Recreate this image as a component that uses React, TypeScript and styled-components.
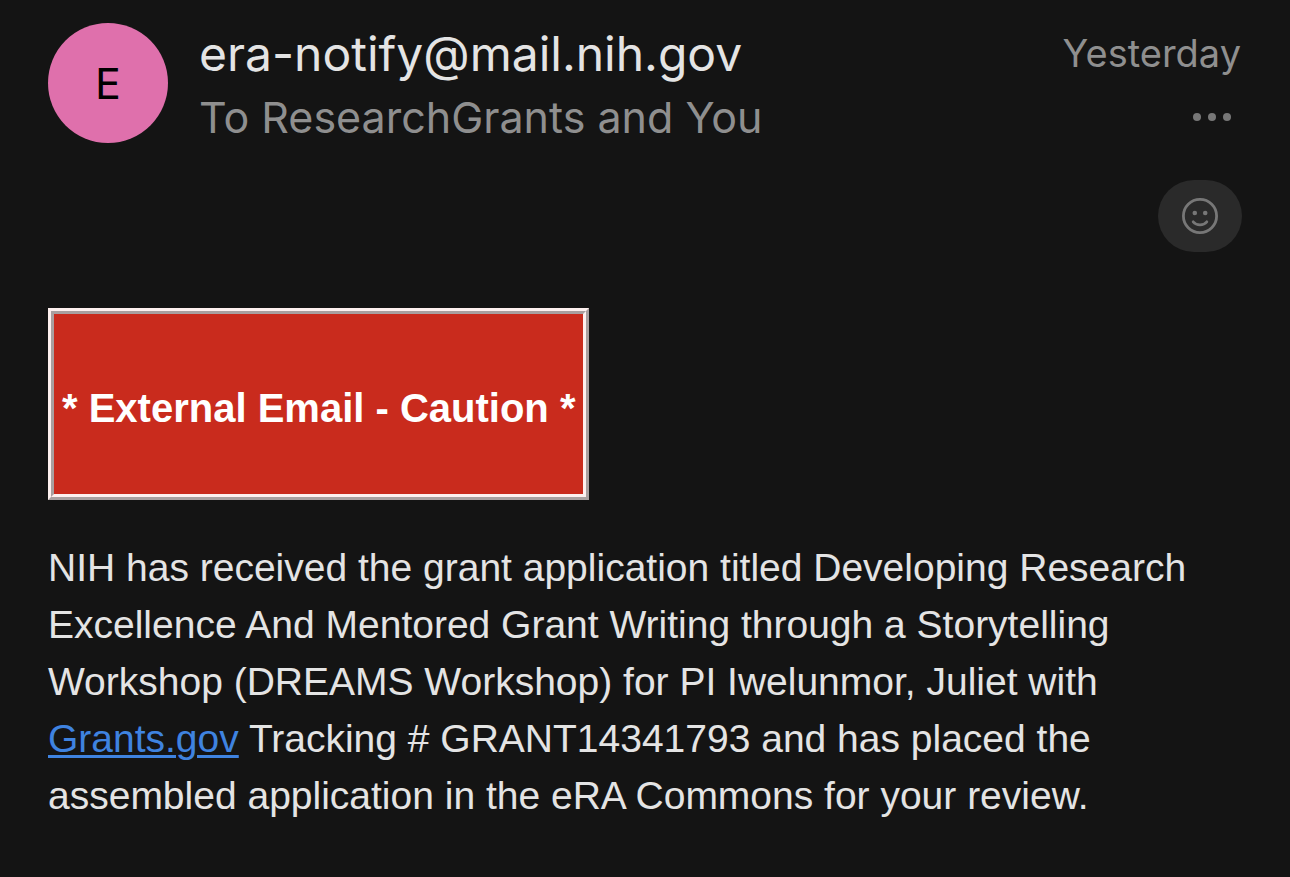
import React from "react";
import styled, { createGlobalStyle } from "styled-components";

const GlobalStyle = createGlobalStyle`
  *, *::before, *::after { box-sizing: border-box; }
  body {
    margin: 0;
    background: #141414;
    color: #e4e4e4;
    font-family: Inter, "Liberation Sans", sans-serif;
  }
`;

const Message = styled.article`
  padding: 23px 48px 24px;
`;

const Header = styled.header`
  display: flex;
  align-items: flex-start;
  gap: 31px;
`;

const Avatar = styled.div`
  display: grid;
  place-items: center;
  flex: none;
  width: 120px;
  height: 120px;
  border-radius: 50%;
  background: #df70ac;
  color: #000;
  font-size: 43px;
`;

const Names = styled.div`
  flex: 1;
  min-width: 0;
`;

const Sender = styled.h1`
  margin: 0;
  font-size: 48px;
  line-height: 62px;
  font-weight: 400;
`;

const Recipients = styled.p`
  margin: 0;
  font-size: 43px;
  line-height: 64px;
  color: #8f8f8f;
`;

const Aside = styled.div`
  display: flex;
  flex-direction: column;
  align-items: flex-end;
`;

const Time = styled.time`
  padding-right: 1px;
  font-size: 38px;
  line-height: 60px;
  color: #8f8f8f;
`;

const IconButton = styled.button`
  display: grid;
  place-items: center;
  border: 0;
  padding: 0;
  color: #777;
  background: transparent;
  cursor: pointer;
`;

const MoreButton = styled(IconButton)`
  width: 60px;
  height: 68px;
`;

const Reactions = styled.div`
  display: flex;
  justify-content: flex-end;
  margin-top: 29px;
`;

const ReactButton = styled(IconButton)`
  width: 84px;
  height: 72px;
  border-radius: 36px;
  background: #2a2a2a;
`;

const Body = styled.div`
  margin-top: 56px;
  font-family: "Liberation Sans", Arial, sans-serif;
  font-size: 39px;
  line-height: 57px;
`;

const Caution = styled.div`
  display: grid;
  place-items: center;
  width: max-content;
  max-width: 100%;
  min-height: 192px;
  padding: 8px 8px 0;
  border: 6px ridge #fdf0ef;
  background: #c92b1d;
  color: #fff;
  font-size: 40px;
  font-weight: 700;
`;

const Paragraph = styled.p`
  max-width: 1160px;
  margin: 39px 0 0;
`;

const Link = styled.a`
  color: #3f83e0;
  text-decoration: underline;
  text-decoration-thickness: 3px;
  text-underline-offset: 3px;
`;

export default function App() {
  return (
    <>
      <GlobalStyle />
      <Message>
        <Header>
          <Avatar aria-hidden="true">E</Avatar>
          <Names>
            <Sender>era-notify@mail.nih.gov</Sender>
            <Recipients>To ResearchGrants and You</Recipients>
          </Names>
          <Aside>
            <Time>Yesterday</Time>
            <MoreButton type="button" aria-label="More actions">
              <svg width="40" height="10" viewBox="0 0 40 10" fill="currentColor">
                <circle cx="5" cy="5" r="4" />
                <circle cx="20" cy="5" r="4" />
                <circle cx="35" cy="5" r="4" />
              </svg>
            </MoreButton>
          </Aside>
        </Header>
        <Reactions>
          <ReactButton type="button" aria-label="Add reaction">
            <svg width="36" height="36" viewBox="0 0 36 36" fill="none">
              <circle cx="18" cy="18" r="16.6" stroke="currentColor" strokeWidth="2.8" />
              <circle cx="12.8" cy="15" r="2.3" fill="currentColor" />
              <circle cx="23.2" cy="15" r="2.3" fill="currentColor" />
              <path
                d="M11.2 23.8C14.6 27.8 21.4 27.8 24.8 23.8"
                stroke="currentColor"
                strokeWidth="2.8"
                strokeLinecap="round"
              />
            </svg>
          </ReactButton>
        </Reactions>
        <Body>
          <Caution role="note">* External Email - Caution *</Caution>
          <Paragraph>
            NIH has received the grant application titled Developing Research Excellence And
            Mentored Grant Writing through a Storytelling Workshop (DREAMS Workshop) for PI
            Iwelunmor, Juliet with <Link href="https://grants.gov">Grants.gov</Link> Tracking #
            GRANT14341793 and has placed the assembled application in the eRA Commons for your
            review.
          </Paragraph>
        </Body>
      </Message>
    </>
  );
}
